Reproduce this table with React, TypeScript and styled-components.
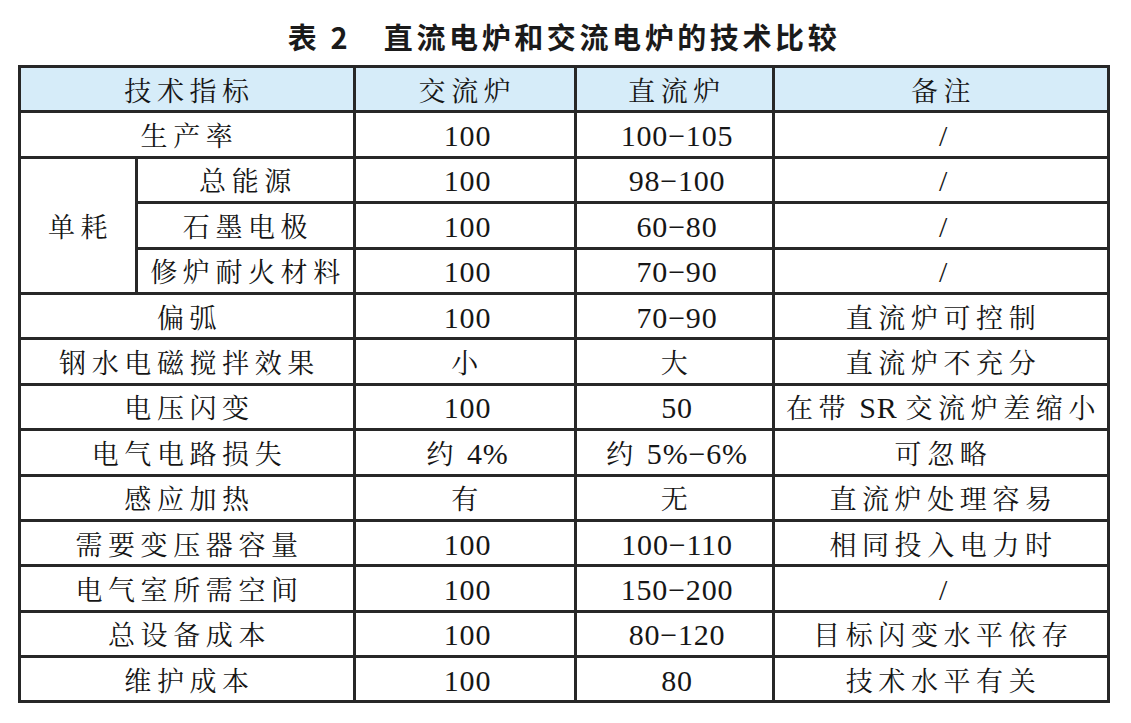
import React from "react";
import styled, { createGlobalStyle } from "styled-components";

const Global = createGlobalStyle`
  html, body { margin: 0; padding: 0; background: #ffffff; }
  body { width: 1131px; height: 723px; overflow: hidden; }
`;

const Page = styled.div`
  width: 1131px;
  padding: 0 21px 0 18px;
  box-sizing: border-box;
`;

const Title = styled.h1`
  margin: 0 0 7px 0;
  padding-top: 14px;
  line-height: 44px;
  text-align: center;
  font-family: "Noto Sans CJK SC", "Liberation Sans", sans-serif;
  font-weight: 700;
  font-size: 29px;
  letter-spacing: 3.6px;
  color: #1a1a1a;
`;

const Table = styled.div`
  display: grid;
  grid-template-columns: 114px 215px 218px 195px 332px;
  grid-auto-rows: 42.4px;
  gap: 3px;
  padding: 3px;
  width: 1092px;
  box-sizing: border-box;
  background: #272727;
`;

const Cell = styled.div<{ $head?: boolean; $span?: number; $rows?: number }>`
  display: flex;
  align-items: center;
  justify-content: center;
  background: ${(p) => (p.$head ? "#d6ecf9" : "#ffffff")};
  grid-column: ${(p) => (p.$span ? `span ${p.$span}` : "auto")};
  grid-row: ${(p) => (p.$rows ? `span ${p.$rows}` : "auto")};
  color: #161616;
`;

const Label = styled.span`
  font-family: "Noto Serif CJK SC", "Source Han Serif SC", "AR PL UMing CN", "Noto Sans CJK SC", serif;
  font-size: 27px;
  font-weight: 400;
  letter-spacing: 5.6px;
  padding-left: 5px;
  white-space: pre;
`;

const Num = styled.span`
  font-family: "Liberation Serif", "DejaVu Serif", serif;
  font-size: 30px;
  font-weight: 400;
  letter-spacing: 0.8px;
`;

const Gap = styled.span`
  display: inline-block;
  width: 8px;
`;

type Row = [string, string, string, string];

const LATIN = /^[0-9A-Za-z%\-−/.]+$/;

const renderText = (t: string) => {
  const parts = t.split(/([0-9A-Za-z%\-−/.]+| )/).filter((p) => p !== "");
  return parts.map((p, i) => {
    if (p === " ") return <Gap key={i} />;
    if (LATIN.test(p)) return <Num key={i}>{p}</Num>;
    return <React.Fragment key={i}>{p}</React.Fragment>;
  });
};

const topRows: Row[] = [["生产率", "100", "100−105", "/"]];

const subRows: Row[] = [
  ["总能源", "100", "98−100", "/"],
  ["石墨电极", "100", "60−80", "/"],
  ["修炉耐火材料", "100", "70−90", "/"],
];

const restRows: Row[] = [
  ["偏弧", "100", "70−90", "直流炉可控制"],
  ["钢水电磁搅拌效果", "小", "大", "直流炉不充分"],
  ["电压闪变", "100", "50", "在带 SR 交流炉差缩小"],
  ["电气电路损失", "约 4%", "约 5%−6%", "可忽略"],
  ["感应加热", "有", "无", "直流炉处理容易"],
  ["需要变压器容量", "100", "100−110", "相同投入电力时"],
  ["电气室所需空间", "100", "150−200", "/"],
  ["总设备成本", "100", "80−120", "目标闪变水平依存"],
  ["维护成本", "100", "80", "技术水平有关"],
];

const TextCell: React.FC<{ text: string; head?: boolean; span?: number; rows?: number }> = ({
  text,
  head,
  span,
  rows,
}) => (
  <Cell $head={head} $span={span} $rows={rows}>
    <Label>{renderText(text)}</Label>
  </Cell>
);

const Values: React.FC<{ row: Row }> = ({ row }) => (
  <>
    <TextCell text={row[1]} />
    <TextCell text={row[2]} />
    <TextCell text={row[3]} />
  </>
);

export default function App() {
  return (
    <Page>
      <Global />
      <Title>表 2　直流电炉和交流电炉的技术比较</Title>
      <Table>
        <TextCell head span={2} text="技术指标" />
        <TextCell head text="交流炉" />
        <TextCell head text="直流炉" />
        <TextCell head text="备注" />

        {topRows.map((r) => (
          <React.Fragment key={r[0]}>
            <TextCell span={2} text={r[0]} />
            <Values row={r} />
          </React.Fragment>
        ))}

        <TextCell rows={3} text="单耗" />
        {subRows.map((r) => (
          <React.Fragment key={r[0]}>
            <TextCell text={r[0]} />
            <Values row={r} />
          </React.Fragment>
        ))}

        {restRows.map((r) => (
          <React.Fragment key={r[0]}>
            <TextCell span={2} text={r[0]} />
            <Values row={r} />
          </React.Fragment>
        ))}
      </Table>
    </Page>
  );
}
